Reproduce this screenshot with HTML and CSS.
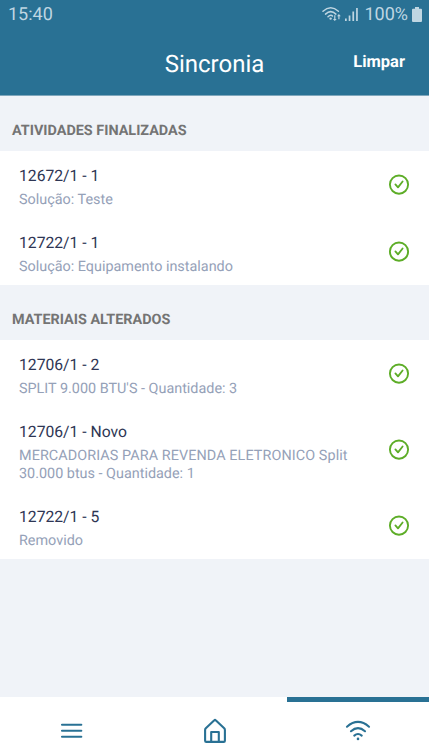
FILE: index.html
```html
<!DOCTYPE html>
<html lang="pt-BR">
<head>
<meta charset="utf-8">
<title>Sincronia</title>
<link rel="stylesheet" href="styles.css">
</head>
<body>
<svg class="defs" aria-hidden="true">
  <symbol id="check" viewBox="0 0 22 22">
    <circle cx="11" cy="10.6" r="9.1" stroke-width="1.9"/>
    <path d="M7.4 10.4l2.6 3 4.6-5.9" stroke-width="1.8"/>
  </symbol>
</svg>
<div class="screen">
  <header class="header">
    <div class="status">
      <span class="clock">15:40</span>
      <div class="indicators">
        <svg class="status-wifi" viewBox="0 0 20 16">
          <g class="line">
            <path d="M1 5.3Q8.7-1.7 16.4 5.3"/>
            <path d="M3.5 8.1Q8.7 3.2 13.9 8.1"/>
            <path d="M6 10.7Q8.7 8.2 10.5 10"/>
          </g>
          <circle cx="8.6" cy="12.6" r="1.2"/>
          <path d="M12.2 9.2h1.2v3.7h1.3l-1.9 2.1-1.9-2.1h1.3zM16.3 13.2h1.2v-3h1.3l-1.9-2.1-1.9 2.1h1.3z"/>
        </svg>
        <svg class="signal" viewBox="0 0 14 14">
          <path d="M0 11.5h1.7v2.5H0zM3.7 8.5h1.7v5.5H3.7zM7.4 4.5h1.7v9.5H7.4zM11.1 1h1.7v13h-1.7z"/>
        </svg>
        <span class="percent">100%</span>
        <svg class="battery" viewBox="0 0 10 15">
          <path d="M3 0h4v1.7h2q1 0 1 1V14q0 1-1 1H1q-1 0-1-1V2.7q0-1 1-1h2z"/>
        </svg>
      </div>
    </div>
    <div class="toolbar">
      <h1 class="title">Sincronia</h1>
      <span class="clear">Limpar</span>
    </div>
  </header>
  <main class="content">
    <h2 class="section">ATIVIDADES FINALIZADAS</h2>
    <ul class="list">
      <li class="row"><div class="text"><p class="name">12672/1 - 1</p><p class="detail">Solução: Teste</p></div><svg class="check"><use href="#check"/></svg></li>
      <li class="row"><div class="text"><p class="name">12722/1 - 1</p><p class="detail">Solução: Equipamento instalando</p></div><svg class="check"><use href="#check"/></svg></li>
    </ul>
    <h2 class="section">MATERIAIS ALTERADOS</h2>
    <ul class="list">
      <li class="row"><div class="text"><p class="name">12706/1 - 2</p><p class="detail">SPLIT 9.000 BTU'S - Quantidade: 3</p></div><svg class="check"><use href="#check"/></svg></li>
      <li class="row"><div class="text"><p class="name">12706/1 - Novo</p><p class="detail"><span class="product">MERCADORIAS PARA REVENDA ELETRONICO Split</span> 30.000 btus - Quantidade: 1</p></div><svg class="check"><use href="#check"/></svg></li>
      <li class="row"><div class="text"><p class="name">12722/1 - 5</p><p class="detail">Removido</p></div><svg class="check"><use href="#check"/></svg></li>
    </ul>
  </main>
  <nav class="tabs">
    <div class="tab"><svg viewBox="0 0 26 26"><path d="M3 6.7h19.3M3 12.7h19.3M3 18.7h19.3"/></svg></div>
    <div class="tab"><svg viewBox="0 0 26 26"><path d="M3.1 12Q3.1 11 3.8 10.3L12.3 2.2Q13 1.5 13.7 2.2L22.2 10.3Q22.9 11 22.9 12V22.7Q22.9 23.9 21.7 23.9H4.3Q3.1 23.9 3.1 22.7zM9.2 23.7V14H16.8V23.7"/></svg></div>
    <div class="tab active"><svg viewBox="0 0 26 26"><path d="M2 8.7Q13-.8 24 8.7M6 13.2Q13 7 20 13.2M9.3 17.6Q13 14.4 16.7 17.6"/><circle cx="13" cy="20.9" r="1.3"/></svg></div>
  </nav>
</div>
</body>
</html>
```
FILE: styles.css
```css
* { box-sizing: border-box; }
body, h1, h2, p, ul { margin: 0; padding: 0; }
body { font-family: Roboto, sans-serif; background: #f0f3f8; text-rendering: geometricPrecision; }
.defs { position: absolute; width: 0; height: 0; }
.screen { display: flex; flex-direction: column; height: 754px; }
.header { height: 96px; background: #297194; border-bottom: 1px solid #7fa7bc; color: #fff; }
.status {
  display: flex; align-items: center; justify-content: space-between;
  height: 28px; padding: 0 7px 0 8px;
  color: #bfd6e2; font-size: 18px;
}
.indicators { display: flex; align-items: center; }
.status svg { fill: #bfd6e2; }
.status-wifi { width: 20px; height: 16px; margin-right: 3px; }
.status-wifi .line { fill: none; stroke: #bfd6e2; stroke-width: 1.5; stroke-linecap: round; }
.signal { width: 14px; height: 14px; margin-right: 5px; }
.battery { width: 10px; height: 15px; margin-left: 4px; }
.toolbar { display: grid; grid-template-columns: 1fr auto 1fr; align-items: center; height: 71px; padding: 0 24px; }
.title { grid-column: 2; font-size: 24px; font-weight: 400; line-height: 28px; }
.clear { justify-self: end; font-size: 16.5px; font-weight: 700; padding-bottom: 2px; }
.content { flex: 1; }
.section {
  height: 55px; padding: 15px 12px 0;
  font-size: 14.4px; line-height: 40px; font-weight: 700; color: #747474;
}
.list { list-style: none; background: #fff; }
.row { display: flex; align-items: center; justify-content: space-between; padding: 9.7px 19px 8.7px; }
.text { width: 340px; }
.name { font-size: 15.7px; line-height: 29px; margin-bottom: 1px; color: #2e3654; }
.detail { font-size: 14.4px; line-height: 18.6px; color: #95a1b8; }
.product { letter-spacing: 0.08px; }
.check { width: 22px; height: 22px; fill: none; stroke: #5dad27; stroke-linecap: round; stroke-linejoin: round; }
.tabs { display: grid; grid-template-columns: 143px 144px 1fr; height: 57px; background: #fff; }
.tab { display: flex; align-items: center; justify-content: center; padding-top: 10px; }
.tab.active { border-top: 5px solid #297194; padding-top: 5px; }
.tab svg { width: 26px; height: 26px; fill: none; stroke: #297194; stroke-width: 2.1; stroke-linecap: round; stroke-linejoin: round; }
.tab circle { fill: #297194; stroke: none; }
```
